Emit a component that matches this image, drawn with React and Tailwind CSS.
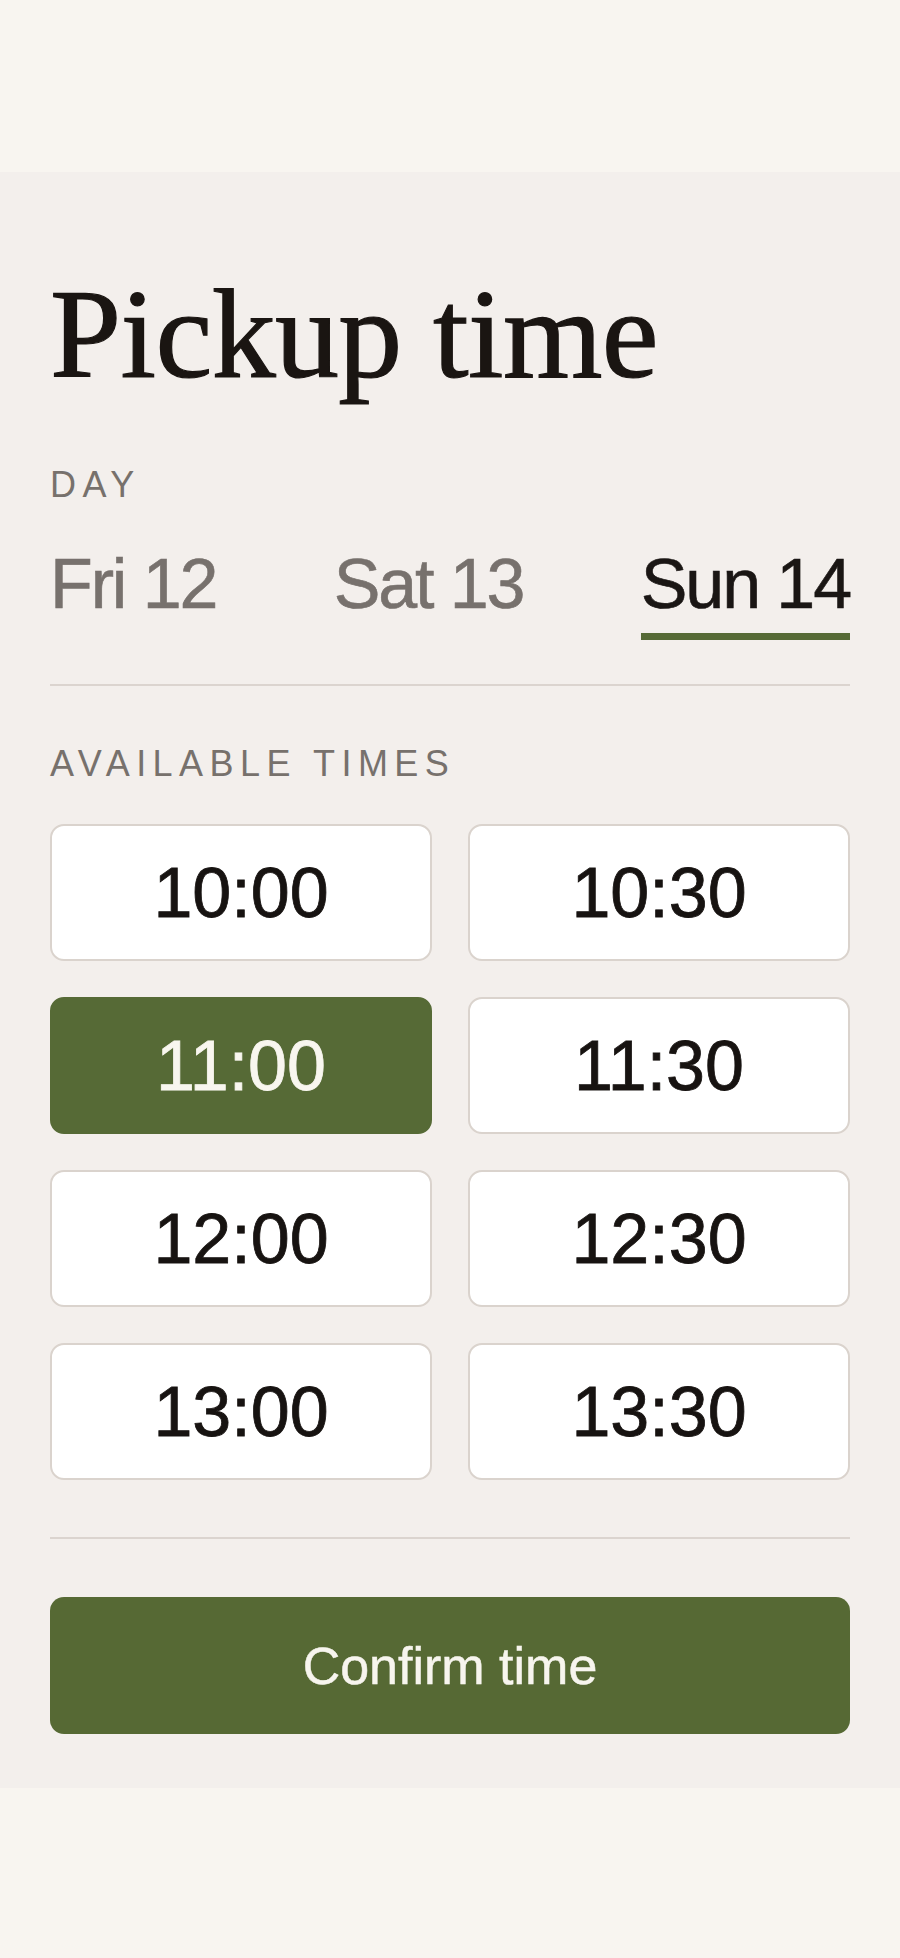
import { useState } from 'react'

const DAYS = ['Fri 12', 'Sat 13', 'Sun 14']
const TIMES = ['10:00', '10:30', '11:00', '11:30', '12:00', '12:30', '13:00', '13:30']

export default function App() {
  const [day, setDay] = useState('Sun 14')
  const [time, setTime] = useState('11:00')

  return (
    <div className="min-h-[1958px] bg-[#f3efec] font-['Liberation_Sans',Arial,sans-serif] text-[#171311]">
      <div className="h-[172px] bg-[#f8f5f0]" />

      <main className="px-[50px] pt-[98px] pb-[54px]">
        <h1 className="font-['Liberation_Serif','Times_New_Roman',serif] text-[128px] leading-none tracking-[-0.005em] text-[#1a1512] [-webkit-text-stroke:1.2px_#1a1512]">
          Pickup time
        </h1>

        <p className="mt-[69px] text-[36px] leading-none tracking-[0.18em] text-[#77716c]">DAY</p>

        <div className="mt-[46px] flex justify-between">
          {DAYS.map((d) => {
            const active = d === day
            return (
              <button key={d} onClick={() => setDay(d)} className="flex flex-col items-stretch">
                <span
                  className={`text-[70px] leading-none tracking-[-0.03em] [-webkit-text-stroke:0.6px_currentColor] ${
                    active ? 'text-[#1a1614]' : 'text-[#77716d]'
                  }`}
                >
                  {d}
                </span>
                <span className={`mt-[14px] h-[7px] ${active ? 'bg-[#566a36]' : 'bg-transparent'}`} />
              </button>
            )
          })}
        </div>

        <div className="mt-[44px] h-[2px] bg-[#dbd4cf]" />

        <p className="mt-[60px] text-[36px] leading-none tracking-[0.18em] text-[#77716c]">AVAILABLE TIMES</p>

        <div className="mt-[42px] grid grid-cols-2 gap-x-[36px] gap-y-[36px]">
          {TIMES.map((t) => {
            const active = t === time
            return (
              <button
                key={t}
                onClick={() => setTime(t)}
                className={`flex h-[137px] items-center justify-center rounded-[14px] border-2 text-[70px] leading-none [-webkit-text-stroke:0.8px_currentColor] ${
                  active ? 'border-[#566a36] bg-[#566a36] text-[#f8f6ef]' : 'border-[#dad3cd] bg-white text-[#171311]'
                }`}
              >
                {t}
              </button>
            )
          })}
        </div>

        <div className="mt-[57px] h-[2px] bg-[#dbd4cf]" />

        <button className="mt-[58px] flex h-[137px] w-full items-center justify-center rounded-[14px] bg-[#566934] text-[52px] leading-none text-[#f7f5ee] [-webkit-text-stroke:0.5px_currentColor]">
          Confirm time
        </button>
      </main>

      <div className="h-[171px] bg-[#f8f5f0]" />
    </div>
  )
}
